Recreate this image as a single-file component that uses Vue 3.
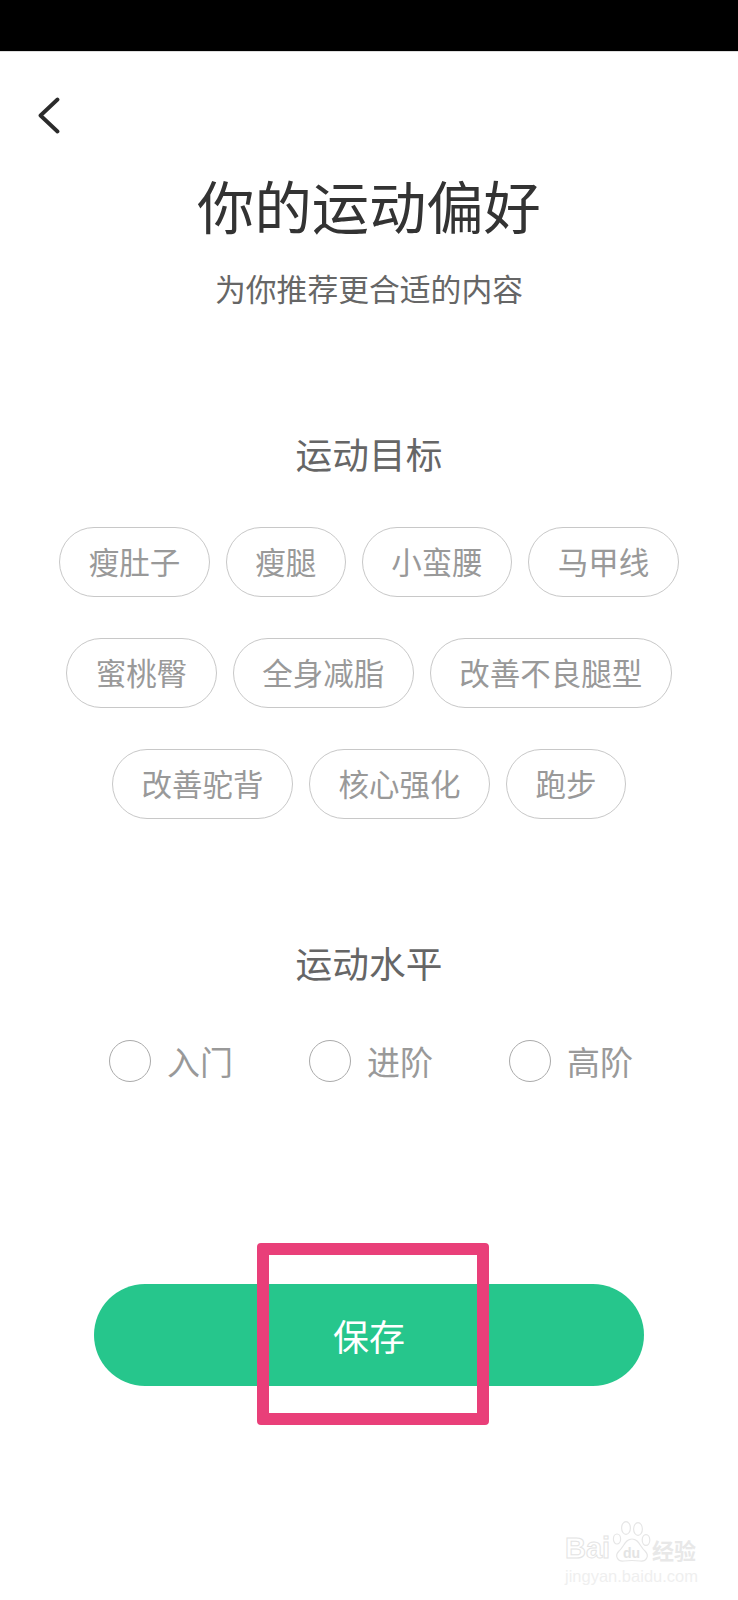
<template>
  <div class="page">
    <div class="status-bar"></div>

    <button class="back" aria-label="返回">
      <svg width="24" height="38" viewBox="0 0 24 38">
        <path d="M20.5 2.5 L3.5 18.5 L20.5 34.5" fill="none" stroke="#2b2b2b" stroke-width="3.8" stroke-linecap="round" stroke-linejoin="round" />
      </svg>
    </button>

    <h1 class="title">你的运动偏好</h1>
    <p class="subtitle">为你推荐更合适的内容</p>

    <h2 class="section-title">运动目标</h2>
    <div class="chips">
      <div class="chip-row" v-for="(row, i) in goals" :key="i">
        <span class="chip" v-for="goal in row" :key="goal">{{ goal }}</span>
      </div>
    </div>

    <h2 class="section-title second">运动水平</h2>
    <div class="levels">
      <label class="level" v-for="level in levels" :key="level">
        <span class="radio"></span>
        <span class="level-text">{{ level }}</span>
      </label>
    </div>

    <div class="save-wrap">
      <button class="save">保存</button>
      <div class="highlight"></div>
    </div>

    <div class="watermark">
      <div class="wm-top">
        <span class="wm-bai">Bai</span>
        <span class="wm-paw">
          <svg width="40" height="44" viewBox="0 0 40 44">
            <g fill="#fff" stroke="#e6e6e6" stroke-width="1.2">
              <ellipse cx="5" cy="19" rx="3.6" ry="5" />
              <ellipse cx="14" cy="8" rx="4.4" ry="6.4" />
              <ellipse cx="26" cy="9" rx="4.4" ry="6.4" />
              <ellipse cx="34" cy="20" rx="3.8" ry="5.4" />
              <path d="M20 19 C13 19 12 27 7 31 C2 36 6 42 12 41 C16 40.5 24 40.5 28 41 C34 42 38 36 33 31 C28 27 27 19 20 19 Z" />
            </g>
          </svg>
          <span class="wm-du">du</span>
        </span>
        <span class="wm-jy">经验</span>
      </div>
      <div class="wm-url">jingyan.baidu.com</div>
    </div>
  </div>
</template>

<script setup>
const goals = [
  ['瘦肚子', '瘦腿', '小蛮腰', '马甲线'],
  ['蜜桃臀', '全身减脂', '改善不良腿型'],
  ['改善驼背', '核心强化', '跑步'],
]
const levels = ['入门', '进阶', '高阶']
</script>

<style>
html, body {
  margin: 0;
  background: #fff;
}
</style>

<style scoped>
.page {
  position: relative;
  width: 738px;
  height: 1600px;
  overflow: hidden;
  background: #fff;
  font-family: "Noto Sans CJK SC", "Noto Sans", sans-serif;
}

.status-bar {
  height: 52px;
  background: #000;
  border-bottom: 1px solid #ddd;
  box-sizing: border-box;
}

.back {
  display: block;
  margin: 45px 0 0 37px;
  padding: 0;
  width: 24px;
  height: 38px;
  border: none;
  background: none;
}

.back svg {
  display: block;
}

.title {
  margin: 40px 0 0;
  font-size: 57.3px;
  line-height: 60px;
  font-weight: 400;
  color: #333;
  text-align: center;
}

.subtitle {
  margin: 33px 0 0;
  font-size: 30.8px;
  line-height: 40px;
  color: #666;
  text-align: center;
}

.section-title {
  margin: 120px 0 0;
  font-size: 36.7px;
  line-height: 50px;
  font-weight: 400;
  color: #666;
  text-align: center;
}

.section-title.second {
  margin-top: 118px;
}

.chips {
  margin-top: 49px;
  display: flex;
  flex-direction: column;
  gap: 41px;
}

.chip-row {
  display: flex;
  justify-content: center;
  gap: 16px;
}

.chip {
  box-sizing: border-box;
  height: 70px;
  padding: 0 28.5px;
  border: 1px solid #c8c8c8;
  border-radius: 35px;
  font-size: 30.5px;
  line-height: 67px;
  color: #999;
  white-space: nowrap;
}

.levels {
  margin-top: 53px;
  padding-left: 4px;
  display: flex;
  justify-content: center;
  gap: 76px;
}

.level {
  display: flex;
  align-items: center;
  gap: 16px;
  height: 42px;
}

.radio {
  box-sizing: border-box;
  width: 42px;
  height: 42px;
  border: 1px solid #aaa;
  border-radius: 50%;
}

.level-text {
  font-size: 33px;
  line-height: 40px;
  color: #999;
}

.save-wrap {
  position: relative;
  margin: 202px 94px 0;
}

.save {
  display: block;
  width: 100%;
  height: 102px;
  border: none;
  border-radius: 51px;
  background: #26c68c;
  color: #fff;
  font-family: inherit;
  font-size: 36px;
  line-height: 102px;
  padding: 0;
}

.highlight {
  position: absolute;
  left: 163px;
  top: -41px;
  width: 232px;
  height: 182px;
  box-sizing: border-box;
  border: 12px solid #e93f79;
  border-radius: 4px;
}

.watermark {
  position: absolute;
  left: 565px;
  top: 1520px;
  width: 136px;
  color: #fff;
  font-family: "Liberation Sans", sans-serif;
}

.wm-top {
  display: flex;
  align-items: flex-end;
  height: 44px;
}

.wm-bai {
  font-size: 29px;
  line-height: 32px;
  font-weight: 700;
  width: 47px;
  -webkit-text-stroke: 1px #e4e4e4;
}

.wm-paw {
  position: relative;
  width: 40px;
  height: 44px;
}

.wm-paw svg {
  display: block;
}

.wm-du {
  position: absolute;
  left: 11px;
  bottom: 3px;
  font-size: 14px;
  line-height: 16px;
  font-weight: 700;
  color: #e4e4e4;
}

.wm-jy {
  font-family: "Noto Sans CJK SC", sans-serif;
  font-size: 22px;
  line-height: 30px;
  font-weight: 700;
  white-space: nowrap;
  color: #e8e8e8;
}

.wm-url {
  margin-top: 2px;
  font-size: 16.5px;
  line-height: 20px;
  white-space: nowrap;
  color: #efefef;
}
</style>
